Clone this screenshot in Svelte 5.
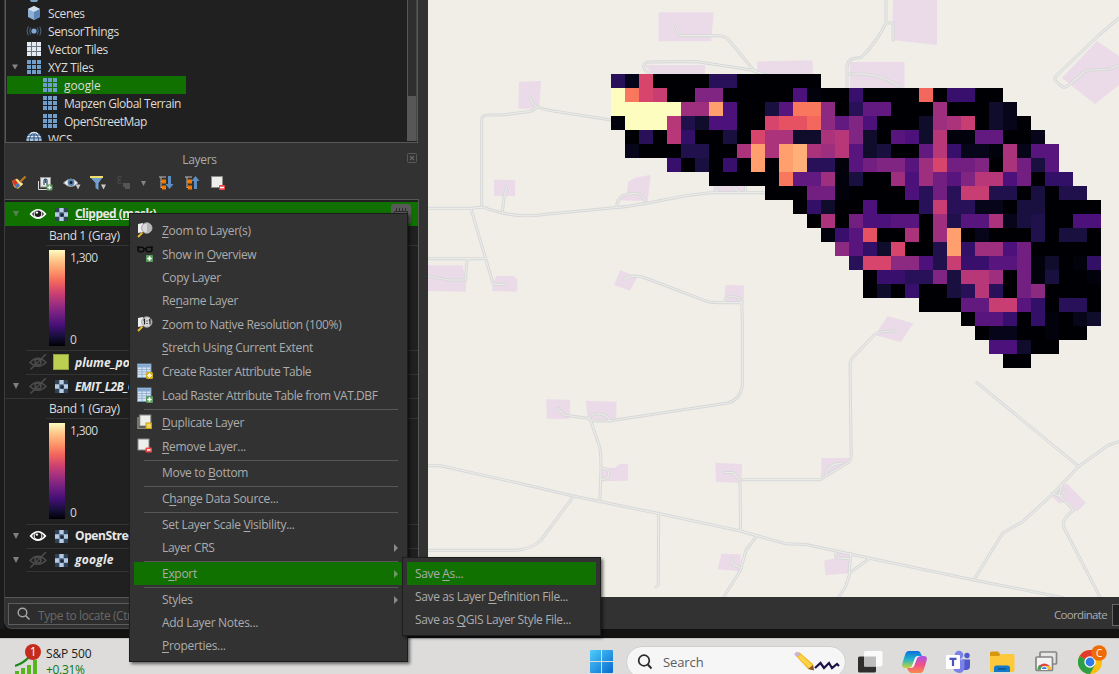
<script>
  const palette = {
    '0': '#000004', '1': '#02020d', a: '#06051a', b: '#0f0c2c', c: '#1a1040', d: '#20114d',
    e: '#29115a', f: '#331067', g: '#390f6e', h: '#4c117a', i: '#59157e', j: '#621980',
    k: '#721f81', l: '#802582', m: '#8c2981', n: '#9e2f7f', o: '#ab337c', p: '#b73779',
    q: '#c83e73', r: '#d8456c', s: '#e75263', t: '#f4675c', u: '#f9785d', v: '#fe9f6d',
    w: '#feb078', y: '#fcfdbf'
  };
  const dots = (n) => '.'.repeat(n);
  const grid = [
    'ear0000ee000000',
    'yurq00ll00000h100g0000t0gg00',
    'yyyyynnvh00ciuum0ejj000n000ba',
    '1yyypdbhh00rsstmjlh000bnoq0ba0',
    '.0e0pf00c0roobboplb0ihbp11jj00a',
    '.a000dd00ovovwonpibc00jpgaa1oaii',
    '....g0c0g0v0vwee1ikllinrkkl0okci',
    dots(7) + '00000ujjn1c00nhnkilpphk0ff',
    dots(11) + '000kk10000hekeqqdd0c0dd',
    dots(13) + '0fb00h000eqeeaa0cc0000',
    dots(14) + '0o0khhii0ndiioacd00hh',
    dots(15) + '1gis00o0nv0a000d0cc0',
    dots(16) + 'mifbr00dvfnnhk00000',
    dots(17) + 'errmmhdqggiik1b01f',
    dots(18) + '0ggeelcppn0k1c001',
    dots(18) + '0b0g00cepe0km0000',
    dots(22) + '000jjqqif0ee0',
    dots(25) + '0iig0f10ab',
    dots(26) + '0aa00100',
    dots(27) + 'hhb00',
    dots(28) + '00'
  ];
  const cells = grid.flatMap((row, r) =>
    [...row].map((k, c) => ({ k, x: 611 + c * 14, y: 74 + r * 14 })).filter((d) => d.k !== '.')
  );

  const pads = [
    '658.5,12.3 713.6,12.3 711.3,41.3 658.5,41.3',
    '645.5,65 705,65 705,74 651,74',
    '757,61.3 812.6,60.3 812.6,75 757,75',
    '519,81.7 541,81 539,108.7 518.3,108.7',
    '494,179.5 515.3,180.3 515,196.3 494,195.7',
    '628.3,181.7 635,177.7 650.7,174.7 647.7,201 617.7,200.3 626.7,193.3',
    '713.3,185 745,185 745,192.3 713.3,192.3',
    '428,265.3 462.3,265.3 466.3,280 465.7,291.7 428,291',
    '496.7,276 513.3,276 517.3,279.3 517.3,291.7 492.3,291 492.7,283',
    '620,270 637.3,277.3 630,290.7 614,285',
    '725.7,285 744,285.3 743.7,303.3 724,302',
    '893,0 937,0 937,45 892,40',
    '850,62 904.5,62 904.5,88 850,88',
    '1062,78 1097,41 1119,56 1119,85 1095,104',
    '546.3,399.3 570.2,399.7 569.3,419 546.7,418.7',
    '585.7,400.7 616.6,401.7 616.2,420.3 588,419.3',
    '602,467.7 615.3,467.7 619.7,464 628.1,463.7 628.1,480.7 602,481.3',
    '715.3,462.7 742.3,464 741,483 715.8,482',
    '821.5,458 850,458 849,463 821,479.5',
    '721.5,553.7 740.6,554.3 740.6,571.3 717.5,569.3',
    '834.4,551.7 850.8,555 848.5,573.3 825.5,575.3 824.2,560.7 834.4,558.3',
    '1066.7,483.3 1085.8,502.7 1077,511.7 1068,501.7 1058.8,503.3 1050.4,494.3',
    '887.7,316 913.3,323.3 900.7,342.3 875,335'
  ];

  const roads = [
    'M675.7 26.7Q677 34 682 35.7H720Q725 35.7 728 39L755 71.7',
    'M648.3 73Q643 70 644 65Q645 62 650 62L696 61.5L751.7 70L766 75',
    'M530 96.7Q530 102 536.7 106.7C545 110 552 111 558.3 111.7L611 120',
    'M536.7 106.7Q534 111 528.3 111.7L501.7 115H487Q481.7 115 481.7 120V206.7',
    'M428 208.3H471.7Q484 206 488 209L502.3 213Q525 218 548.3 214L616.7 207.5C650 205 680 194 713.3 192.7H765',
    'M506.7 186.7L504 198L502.3 212.7',
    'M616.7 206.7Q617 200 622 196Q641 189 645 201',
    'M716 192L719 187M733 186L739 192M745.5 185V192',
    'M471 209L493.3 284.3H506',
    'M428 258.7H485M470 258.7Q466.5 260 466.3 265L465.7 280H448L428 276',
    'M624 279.3Q634 273 648 279L701.7 299.3Q709 303 721.7 302.7H741.7L742.3 320V385Q741 399 728 403L608.7 421H592.3L587.9 418.3L563.5 415L557.8 408.3',
    'M724 302Q727 296 732 296Q741 297 742 304',
    'M588.8 419Q591 414 596 414Q607 413 610 421',
    'M591 421.7L599 445Q601 450 601 470L599.8 501.7',
    'M602 468.3Q609 468 608.7 474Q608 480 602 479.3',
    'M428 465.7H440.5L522.4 484L573.3 496L657.4 513.3L739.2 530.7L757 535.7L785.7 543.7L806 544.5L869.8 558.3L973.8 580L1062.3 597.5',
    'M573.3 496.7L541 540Q532 549 516 550.3H428',
    'M658.7 513.3L658.2 585L656 587',
    'M740.6 530.7L740 480L733 472.5H724.6',
    'M742.3 479.7H820.2L849 462Q851 460 851.2 456L850 365Q850 361 852.5 358L874 335Q878 331 895 331',
    'M825.5 475Q827.7 464 841 463.3',
    'M757 535.7L746 550L740.6 570L723.7 597',
    'M731.7 558.3Q731 566 740 567.3',
    'M869.8 558.3L850 572.7L845.5 586.7L838.8 597M850.8 553L849 573M835.7 552.3Q836 558 840 558.3H849',
    'M976.9 382.7L1079 466.7',
    'M1119 441.7L1108.8 445L1079 466L1053.5 493.3L1022.5 521.7L1002.6 533.3L973.8 580',
    'M1062.3 483.3L1059 495L1073.4 510Q1060 521 1064 528L1100 597M1053 493L1060 497L1065 490',
    'M847 88V68Q847 58 857 58L862 57Q878 40 886 23V0M847 74H853Q880 73 900 87M886 23H893V40',
    'M1119 18L1098 36L1056 76Q1053 80 1058 83L1063 87Q1066 88 1070 84L1083 73Q1086 70 1092 70L1110 69L1119 65'
  ];

  const browser = [
    { t: 'Scenes', icon: 'cube' },
    { t: 'SensorThings', icon: 'sensor' },
    { t: 'Vector Tiles', icon: 'vgrid' },
    { t: 'XYZ Tiles', icon: 'grid', open: true },
    { t: 'google', icon: 'grid', child: true, sel: true },
    { t: 'Mapzen Global Terrain', icon: 'grid', child: true },
    { t: 'OpenStreetMap', icon: 'grid', child: true },
    { t: 'WCS', icon: 'globe' }
  ];

  const menu = [
    { p: ['', 'Z', 'oom to Layer(s)'], icon: 'zoom' },
    { p: ['Show in ', 'O', 'verview'], icon: 'overview' },
    { p: ['Copy Layer', '', ''] },
    { p: ['Re', 'n', 'ame Layer'] },
    { p: ['Zoom to Nat', 'i', 've Resolution (100%)'], icon: 'native' },
    { p: ['', 'S', 'tretch Using Current Extent'] },
    { p: ['Create Raster Attribute Table', '', ''], icon: 'tablenew', tight: true },
    { p: ['Load Raster Attribute Table from VAT.DBF', '', ''], icon: 'tableadd', tight: true },
    null,
    { p: ['', 'D', 'uplicate Layer'], icon: 'dup' },
    { p: ['', 'R', 'emove Layer...'], icon: 'remove' },
    null,
    { p: ['Move to ', 'B', 'ottom'] },
    null,
    { p: ['C', 'h', 'ange Data Source...'] },
    null,
    { p: ['Set Layer Scale ', 'V', 'isibility...'] },
    { p: ['Layer CRS', '', ''], sub: true },
    null,
    { p: ['E', 'x', 'port'], sub: true, sel: true },
    null,
    { p: ['Styles', '', ''], sub: true },
    { p: ['Add Layer Notes...', '', ''] },
    { p: ['', 'P', 'roperties...'] }
  ];
  const submenu = [
    { p: ['Save ', 'A', 's...'], sel: true },
    { p: ['Save as Layer ', 'D', 'efinition File...'] },
    { p: ['Save as ', 'Q', 'GIS Layer Style File...'] }
  ];
  const nine = [0, 1, 2, 3, 4, 5, 6, 7, 8];
</script>

{#snippet treeIcon(kind)}
  <svg class="i16" viewBox="0 0 16 16">
    {#if kind === 'cube'}
      <path d="M2 4L8 1L14 4V12L8 15L2 12Z" fill="#8fb0d3" />
      <path d="M2 4L8 1L14 4L8 7Z" fill="#d3e1ef" />
      <path d="M8 7L14 4V12L8 15Z" fill="#5c87b6" />
    {:else if kind === 'sensor'}
      <circle cx="8" cy="8" r="2.6" fill="#7ea9d6" />
      <path d="M4.6 4.5Q2.8 8 4.6 11.5M11.4 4.5Q13.2 8 11.4 11.5M2.2 3.5Q-.2 8 2.2 12.5M13.8 3.5Q16.2 8 13.8 12.5" fill="none" stroke="#4c6784" />
    {:else if kind === 'globe'}
      <circle cx="8" cy="8.500" r="7.500" fill="#6e94bd" />
      <path d="M1.500 5.500H14.500M.5 9H15.500" stroke="#e2ecf5" stroke-width="1.200" fill="none" />
      <path d="M8 1Q2.500 5 3.500 12M8 1Q13.500 5 12.500 12M8 1V12" stroke="#32506f" stroke-width="1" fill="none" />
      <path d="M4 3Q8 0 12 3" stroke="#e2ecf5" stroke-width="1.300" fill="none" />
    {:else}
      {#if kind === 'vgrid'}<rect x="1" y="1" width="14" height="14" fill="#6b7785" />{/if}
      {#each nine as n}
        <rect x={1 + (n % 3) * 5} y={1 + Math.floor(n / 3) * 5} width="4" height="4"
          fill={kind === 'vgrid' ? '#e6ebf2' : '#6f9dcc'} />
      {/each}
    {/if}
  </svg>
{/snippet}

{#snippet eye()}
  <svg class="eye" viewBox="0 0 18 14">
    <path d="M.5 7Q9-3 17.500 7Q9 17 .5 7Z" fill="#fff" />
    <path d="M2.800 7Q4 5.200 5.600 4.300Q4.200 7 5.600 9.700Q4 8.800 2.800 7ZM15.200 7Q14 5.200 12.400 4.300Q13.800 7 12.400 9.700Q14 8.800 15.200 7Z" fill="#5a5a5a" />
    <circle cx="9" cy="6.800" r="3.300" fill="#1c1c1c" />
    <circle cx="7.900" cy="5.600" r="1.200" fill="#fff" />
  </svg>
{/snippet}
{#snippet eyeOff()}
  <svg class="eye off" viewBox="0 0 18 16">
    <path d="M1 8.500Q9 0 17 8.500Q9 16 1 8.500Z M17 0L1.500 15.500" fill="none" stroke="#4c4c4c" stroke-width="1.500" />
    <circle cx="9" cy="8" r="3" fill="none" stroke="#4c4c4c" stroke-width="1.500" />
  </svg>
{/snippet}
{#snippet raster()}
  <svg class="ras" viewBox="0 0 13 13">
    <path d="M0 0H13V13H0Z" fill="#2f4258" />
    <path d="M4.300 0H8.700V4.300H13V8.700H8.700V13H4.300V8.700H0V4.300H4.300Z" fill="#b5cbe3" />
    <path d="M4.300 4.300H8.700V8.700H4.300Z" fill="#49617c" />
    <path d="M5.500 5.500H8.700V8.700H5.500Z" fill="#1c2733" />
  </svg>
{/snippet}

{#snippet menuIcon(kind)}
  <svg class="mi" viewBox="0 0 16 16">
    {#if kind === 'zoom' || kind === 'native'}
      <path d="M1 2L6 1V10L1 11Z" fill="#eee" />
      <path d="M1 15L5.500 10.500" stroke="#e3b83b" stroke-width="2" />
      <circle cx="9.800" cy="6" r="5.200" fill="#d9d9d9" stroke="#a5a5a5" />
      {#if kind === 'zoom'}
        <path d="M10 1.500A4.500 4.500 0 0 1 10 10.500Z" fill="#b5b5b5" />
      {:else}
        <path d="M6.500 4.500L7.500 3.500V8.500M12 4.500L13 3.500V8.500M10 4.500V5.500M10 7V8" stroke="#222" stroke-width="1.200" fill="none" />
      {/if}
    {:else if kind === 'overview'}
      <path d="M0 1H2M14 1H16" stroke="#0b0b0b" stroke-width="1.500" />
      <rect x="1" y="1.300" width="6" height="4.500" rx="2.200" fill="none" stroke="#0b0b0b" stroke-width="1.500" />
      <rect x="9" y="1.300" width="6" height="4.500" rx="2.200" fill="none" stroke="#0b0b0b" stroke-width="1.500" />
      <path d="M7 2.500H9" stroke="#0b0b0b" />
      <rect x="9" y="9" width="7" height="7" rx="1" fill="#5a9a5f" />
      <path d="M12.500 10.300V14.700M10.300 12.500H14.700" stroke="#fff" stroke-width="1.600" />
    {:else if kind === 'tablenew' || kind === 'tableadd'}
      <rect x=".5" y="1" width="13.500" height="13.500" fill="#d8e4f1" stroke="#7296bd" />
      <rect x="1" y="1.500" width="12.500" height="3" fill="#85aad2" />
      <path d="M1 6.500H14M1 8.800H14M1 11.200H14M5 4V14M9.500 4V14" stroke="#8aa9ca" stroke-width=".8" />
      {#if kind === 'tablenew'}
        <rect x="9" y="9" width="7" height="7" rx="1.500" fill="#d3ad1d" />
        <path d="M12.500 10V15M10 12.500H15M10.800 10.800L14.200 14.200M14.200 10.800L10.800 14.200" stroke="#fff6c8" />
      {:else}
        <rect x="9" y="9" width="7" height="7" rx="1" fill="#5a9a5f" />
        <path d="M12.500 10.300V14.700M10.300 12.500H14.700" stroke="#fff" stroke-width="1.600" />
      {/if}
    {:else if kind === 'dup'}
      <path d="M1 3V14.300H11" fill="none" stroke="#8b8b86" stroke-width="1.500" />
      <rect x="2.800" y="1" width="11" height="11" fill="#eeeeec" stroke="#888a85" />
      <rect x="9" y="9" width="5.500" height="5.500" fill="#f2d45c" stroke="#c4a000" />
    {:else}
      <rect x="1" y="1" width="11" height="11" fill="#eeeeec" stroke="#888a85" />
      <rect x="8.500" y="9.500" width="6.500" height="5" rx="1" fill="#ef4444" />
      <path d="M10 12H13.500" stroke="#fff" stroke-width="1.500" />
    {/if}
  </svg>
{/snippet}

{#snippet menuItem(it)}
  <div class="item" class:tall={it.icon} class:sel={it.sel} class:tight={it.tight}>
    <span class="ico">{#if it.icon}{@render menuIcon(it.icon)}{/if}</span>
    <span class="label">{it.p[0]}<u>{it.p[1]}</u>{it.p[2]}</span>
    {#if it.sub}<svg class="arr" viewBox="0 0 4 8"><path d="M0 0L4 4L0 8Z" fill={it.sel ? '#6f9a68' : '#8a8a8a'} /></svg>{/if}
  </div>
{/snippet}

{#snippet legend()}
  <div class="row band"><span>Band 1 (Gray)</span></div>
  <div class="ramp">
    <div class="bar"></div>
    <div class="vals"><span>1,300</span><span>0</span></div>
  </div>
{/snippet}

<div class="app">
  <div class="work">
    <div class="edge"></div>
    <aside>
      <div class="browser">
        <div class="tree">
          <div class="prev"></div>
          {#each browser as b}
            <div class="brow" class:child={b.child} class:sel={b.sel}>
              <span class="tw">{#if b.open}<svg viewBox="0 0 6 6"><path d="M0 .5H6L3 5.500Z" fill="#858585" /></svg>{/if}</span>
              {@render treeIcon(b.icon)}
              <span class="bt">{b.t}</span>
            </div>
          {/each}
        </div>
        <div class="scroll"><div class="thumb"></div></div>
      </div>

      <header>
        <span>Layers</span>
        <svg class="close" viewBox="0 0 10 10"><rect x=".5" y=".5" width="9" height="9" rx="1" fill="none" stroke="#5a5a5a" /><path d="M3 3L7 7M7 3L3 7" stroke="#666" stroke-width="1.200" /></svg>
      </header>

      <div class="tools">
        <svg width="16" height="16" viewBox="0 0 16 16">
          <path d="M1 6L6 3.500L12 9L7 14L3 12Z" fill="#e9b93b" /><path d="M1 6L4 4.500L7 8L3.500 11Z" fill="#d9362b" /><path d="M3.500 11L7 8L9 10L6.500 13.500Z" fill="#3e78bd" /><path d="M6 4L12 9L10 11L5 5Z" fill="#f6e6a0" /><path d="M9 7L14.500 1.500" stroke="#b9791f" stroke-width="2.200" />
        </svg>
        <svg width="16" height="16" viewBox="0 0 16 16">
          <path d="M1.500 6V14.500H10" fill="none" stroke="#ddd" /><rect x="3.500" y="2.500" width="10" height="9.500" fill="#e8e8e8" stroke="#999" /><path d="M7 10V5Q8.500 3 10 5V10M8.500 4V8" fill="none" stroke="#35526f" stroke-width="1.200" /><rect x="9.500" y="9.500" width="6" height="6" rx="1" fill="#5a9a5f" /><path d="M12.500 10.500V14.500M10.500 12.500H14.500" stroke="#fff" stroke-width="1.300" />
        </svg>
        <svg width="18" height="16" viewBox="0 0 18 16">
          <path d="M.5 8Q8 0 15 8Q8 15 .5 8Z" fill="#f2f2f2" stroke="#9a9a9a" /><circle cx="8" cy="7.500" r="3.400" fill="#5682b0" /><circle cx="8" cy="7.500" r="1.500" fill="#16202b" /><path d="M12.500 9.500H17.500L15 14.500Z" fill="#c9c9c9" />
        </svg>
        <svg width="18" height="16" viewBox="0 0 18 16">
          <path d="M1 2H14L9.500 8V15L6.500 13V8Z" fill="#729fcf" /><path d="M1 1H14V3H1Z" fill="#f3e06c" /><path d="M12 9.500H17L14.500 14.500Z" fill="#c9c9c9" />
        </svg>
        <svg width="16" height="16" viewBox="0 0 16 16">
          <path d="M6 2Q1 1 2 4Q3 5 5 5Q1 5 2 8Q3 9 6 8" fill="none" stroke="#454545" stroke-width="1.300" /><path d="M7 8H14V14H9V12H7Z" fill="#555" />
        </svg>
        <svg class="dd" width="5" height="5" viewBox="0 0 6 6"><path d="M0 0H6L3 6Z" fill="#858585" /></svg>
        <svg width="16" height="16" viewBox="0 0 16 16">
          <path d="M1 2H8M3 2V13M3 6.500H6M3 12.500H6" stroke="#bbb" fill="none" /><rect x="4" y="4.500" width="4" height="4" fill="#f57900" /><rect x="4" y="10.500" width="4" height="4" fill="#f57900" /><path d="M10 1H13V9H15.500L11.500 14L7.500 9H10Z" fill="#5e8fc4" />
        </svg>
        <svg width="16" height="16" viewBox="0 0 16 16">
          <path d="M1 2H8M3 2V13M3 6.500H6M3 12.500H6" stroke="#bbb" fill="none" /><rect x="4" y="4.500" width="4" height="4" fill="#f57900" /><rect x="4" y="10.500" width="4" height="4" fill="#f57900" /><path d="M10 14H13V6H15.500L11.500 1L7.500 6H10Z" fill="#5e8fc4" />
        </svg>
        <svg width="16" height="16" viewBox="0 0 16 16">
          <rect x="1.500" y="1.500" width="11" height="11" fill="#eeeeec" stroke="#888a85" /><rect x="9" y="10" width="6" height="5" rx="1" fill="#ef4444" /><path d="M10 12.500H14" stroke="#fff" stroke-width="1.500" />
        </svg>
      </div>

      <div class="layers">
        <div class="row lay selrow">
          <i class="tri"></i>{@render eye()}{@render raster()}<b class="und">Clipped (mask)</b>
          <span class="chip"><svg width="14" height="10" viewBox="0 0 14 10"><path d="M2.500 0V3M5.500 0V3M8.500 0V3M11.500 0V3M.5 10V3.500H13.500V10" stroke="#2d2d2d" fill="none" /></svg></span>
        </div>
        {@render legend()}
        <div class="row lay top"><i></i>{@render eyeOff()}<span class="swatch"></span><b class="it">plume_polygons</b></div>
        <div class="row lay top"><i class="tri"></i>{@render eyeOff()}{@render raster()}<b class="it emit">EMIT_L2B_CH4</b></div>
        <div class="lg2">{@render legend()}</div>
        <div class="row lay top"><i class="tri"></i>{@render eye()}{@render raster()}<b>OpenStreetMap</b></div>
        <div class="row lay top last"><i class="tri"></i>{@render eyeOff()}{@render raster()}<b class="it goog">google</b></div>
      </div>

      <div class="locate">
        <svg width="14" height="14" viewBox="0 0 14 14"><circle cx="5.500" cy="5.500" r="4.300" fill="none" stroke="#a8a8a8" stroke-width="1.400" /><path d="M8.700 8.700L12.500 12.500" stroke="#a8a8a8" stroke-width="1.600" /></svg>
        <span>Type to locate (Ctrl+K)</span>
      </div>
    </aside>

    <main>
      <svg class="map" width="691" height="597" viewBox="428 0 691 597">
        {#each pads as p}<polygon points={p} fill="#ebdbe8" />{/each}
        <g fill="none" stroke-linejoin="round" stroke-linecap="round">
          {#each roads as d}<path {d} stroke="#d6d8d8" stroke-width="3" />{/each}
          {#each roads as d}<path {d} stroke="#ebebe8" stroke-width="1.200" />{/each}
        </g>
        <g shape-rendering="crispEdges">
          {#each cells as c}<rect x={c.x} y={c.y} width="14" height="14" fill={palette[c.k]} />{/each}
        </g>
      </svg>
      <div class="status"><span>Coordinate</span><div class="coord"></div></div>
    </main>
  </div>
  <div class="gap"></div>

  <footer>
    <div class="stock">
      <svg width="26" height="30" viewBox="0 0 26 30">
        <path d="M0 27H4V30H0ZM6 24H10V30H6ZM12 21H16V30H12ZM18 16H22V30H18Z" fill="#58b520" />
        <path d="M0 22Q9 19 15 12" fill="none" stroke="#1c8a1c" stroke-width="2.200" />
        <circle cx="18" cy="8" r="8" fill="#c42b1c" />
        <text x="18" y="12.200" text-anchor="middle" font-size="12" fill="#fff" font-family="Open Sans, sans-serif">1</text>
      </svg>
      <div class="quote"><span class="sp">S&amp;P 500</span><span class="up">+0.31%</span></div>
    </div>
    <div class="dock">
      <svg width="24" height="24" viewBox="0 0 24 24" class="win">
        <defs><linearGradient id="wg" x1="0" y1="0" x2="1" y2="1"><stop offset="0" stop-color="#4fcdfb" /><stop offset="1" stop-color="#0669cf" /></linearGradient></defs>
        <path d="M0 1Q0 0 1 0H11V11H0ZM12 0H22Q23 0 23 1V11H12ZM0 12H11V23H1Q0 23 0 22ZM12 12H23V22Q23 23 22 23H12Z" fill="url(#wg)" />
      </svg>
      <div class="search">
        <svg width="16" height="16" viewBox="0 0 16 16"><circle cx="7" cy="6.500" r="5.300" fill="none" stroke="#2b2b2b" stroke-width="1.700" /><path d="M10.800 10.500L14.500 14.500" stroke="#2b2b2b" stroke-width="2" /></svg>
        <span>Search</span>
        <svg width="48" height="22" viewBox="0 0 48 22">
          <path d="M2 4L6 1L20 13L21 19L15 18Z" fill="#f5b91d" /><path d="M5 6L17 18L20 15L8 4Z" fill="#fbd34c" /><path d="M1 3L4 .5L7 3.500L4 6Z" fill="#c9b3e0" /><path d="M15 18L21 19.500L20 14Z" fill="#8b5a24" />
          <path d="M22 17L27.500 12L31 17L36 12L39 17L44 13L46 15" fill="none" stroke="#1a1446" stroke-width="2.200" />
        </svg>
      </div>
      <svg class="tv" width="26" height="24" viewBox="0 0 26 24"><rect x="0" y="6.500" width="18" height="16" rx="1.500" fill="#2e2e2e" /><rect x="6" y="1" width="18.500" height="15.500" rx="1.500" fill="#fafafa" /><rect x="6" y="6.500" width="12" height="10" fill="#bdbdbd" /></svg>
      <svg class="cp" width="25" height="24" viewBox="0 0 25 24">
        <defs>
          <linearGradient id="c1" x1="0" y1="0" x2="0" y2="1"><stop offset="0" stop-color="#0a6fe0" /><stop offset=".5" stop-color="#24b3c9" /><stop offset="1" stop-color="#c8d53a" /></linearGradient>
          <linearGradient id="c2" x1="0" y1="0" x2="0" y2="1"><stop offset="0" stop-color="#a855e8" /><stop offset=".5" stop-color="#ee4f8c" /><stop offset="1" stop-color="#fb8a4a" /></linearGradient>
        </defs>
        <path d="M7 1H16Q18 1 19 4L20 6H16Q14 6 13 8L10 16Q9 18 6 18H3Q-1 18 .5 13L3 5Q4 1 7 1Z" fill="url(#c1)" />
        <path d="M18 23H9Q7 23 6 20L5 18H9Q11 18 12 16L15 8Q16 6 19 6H22Q26 6 24.500 11L22 19Q21 23 18 23Z" fill="url(#c2)" />
        <path d="M13 8Q14 6 16 6H19Q16 6 15 8L12 16Q11 18 8 18Q9.500 17.500 10 16Z" fill="#fff" opacity=".7" />
      </svg>
      <svg class="tm" width="25" height="24" viewBox="0 0 25 24"><circle cx="13" cy="5" r="4.300" fill="#7b83eb" /><circle cx="21" cy="5.500" r="2.700" fill="#5059c9" /><path d="M16 9.500H24V16Q24 20 20 20H16Z" fill="#5059c9" /><path d="M7 9.500H18.500V17Q18 23 13 23Q7 22 7 17Z" fill="#7b83eb" /><rect x="0" y="5" width="14" height="14" rx="1" fill="#fff" /><path d="M3.500 8.800H10.500M7 8.800V16" stroke="#4b53bc" stroke-width="2.200" /></svg>
      <svg class="fd" width="25" height="24" viewBox="0 0 25 24"><path d="M0 3Q0 1.500 1.500 1.500H8L10 4V8H0Z" fill="#d9980b" /><path d="M0 6H9L11 4H23Q24.500 4 24.500 5.500V20Q24.500 22 23 22H1.500Q0 22 0 20Z" fill="#fdc83a" /><path d="M4 22V18Q4 15.500 6.500 15.500H17.500Q20 15.500 20 18V22Z" fill="#1479c9" /><path d="M8 19H16" stroke="#0c528f" stroke-width="1.500" /></svg>
      <svg class="cr" width="23" height="24" viewBox="0 0 23 24"><rect x="5" y="2" width="16.500" height="12" rx="1" fill="#e6e6e6" stroke="#858585" stroke-width="1.700" /><rect x="1" y="7" width="16.500" height="13.500" rx="1" fill="#f3f3f3" stroke="#858585" stroke-width="1.700" /><path d="M2.500 19.500A6.800 6.800 0 0 1 16 19.500Z" fill="#e0453a" /><path d="M2.500 19.500A6.800 6.800 0 0 1 4.500 14.800L8 19.500Z" fill="#38a852" /><path d="M16 19.500A6.500 6.500 0 0 0 15 16H10V19.500Z" fill="#f7bf28" /><path d="M6.200 19.500A3.100 3.100 0 0 1 12.400 19.500Z" fill="#3f7fe8" stroke="#fff" /></svg>
      <svg class="ch" width="30" height="32" viewBox="0 0 30 32">
        <circle cx="12" cy="18" r="12" fill="#fbbf12" /><path d="M12 18L1.600 12A12 12 0 0 1 22.400 12Z" fill="#e33b2e" /><path d="M12 6A12 12 0 0 1 22.400 12H12Z" fill="#e33b2e" /><path d="M12 18L1.600 12A12 12 0 0 0 12 30L17 21Z" fill="#2c9f47" /><circle cx="12" cy="18" r="5.700" fill="#fff" /><circle cx="12" cy="18" r="4.400" fill="#2f7bea" />
        <circle cx="21" cy="9" r="7.800" fill="#ee6c05" /><text x="21" y="12.800" text-anchor="middle" font-size="10" fill="#fff" font-family="Open Sans, sans-serif">C</text>
      </svg>
    </div>
  </footer>

  <div class="menu main">
    {#each menu as it}
      {#if it}{@render menuItem(it)}{:else}<div class="sep"></div>{/if}
    {/each}
  </div>
  <div class="menu sub">
    {#each submenu as it}{@render menuItem(it)}{/each}
  </div>
</div>

<style>
  :global(body) { background: #323232; overflow: hidden; }
  .app { position: relative; width: 1119px; height: 674px; overflow: hidden; display: flex; flex-direction: column; font: 12px/18px "Open Sans", "Noto Sans", sans-serif; letter-spacing: -0.3px; color: #dcdcdc; background: #121212; white-space: nowrap; }
  svg { display: block; flex: none; }
  .work { display: flex; height: 629px; }
  .edge { width: 4px; background: #1a1b1d; }
  aside { width: 424px; box-sizing: border-box; background: #323232; display: flex; flex-direction: column; border-left: 1px solid #3c3c3c; border-bottom: 1px solid #484848; border-bottom-left-radius: 8px; }
  .browser { width: 413px; height: 143px; box-sizing: border-box; border: 1px solid #575757; border-top: 0; background: #202020; display: flex; padding-bottom: 1px; }
  .tree { flex: 1; overflow: hidden; padding-left: 1px; }
  .prev { height: 4px; }
  .prev::after { content: ""; display: block; width: 8px; height: 2px; margin-left: 23px; border-radius: 0 0 5px 5px; background: #7da0c5; }
  .brow { display: flex; align-items: center; height: 18px; }
  .brow.child { padding-left: 16px; width: 163px; }
  .brow.sel { background: #107000; }
  .tw { width: 19px; }
  .tw svg { width: 6px; height: 6px; margin-left: 5px; }
  .i16 { width: 16px; height: 16px; }
  .bt { margin-left: 6px; padding-top: 2px; letter-spacing: -0.36px; }
  .child .bt { letter-spacing: -0.480px; }
  .child.sel .bt { letter-spacing: -0.100px; }
  .scroll { width: 10px; border-left: 1px solid #575757; border-right: 1px solid #484848; background: #2f2f2f; display: flex; align-items: flex-end; box-sizing: border-box; }
  .thumb { width: 10px; height: 45px; background: #575757; }
  header { height: 32px; padding-top: 1px; display: flex; align-items: center; color: #ababab; position: relative; box-sizing: border-box; }
  header span { width: 389px; text-align: center; padding-top: 1px; }
  .close { width: 10px; height: 10px; position: absolute; left: 402px; top: 10px; }
  .tools { height: 24px; display: flex; padding-left: 6px; align-items: flex-start; }
  .tools svg { margin-right: 10px; }
  .tools svg:nth-child(3) { margin-right: 8px; }
  .tools svg:nth-child(4) { margin-right: 9px; }
  .tools svg.dd { margin: 6px 12px 0 -1px; }
  .layers { width: 414px; height: 399px; box-sizing: border-box; border: 1px solid #575757; border-left: 0; background: #202020; padding-top: 2px; overflow: hidden; }
  .row { display: flex; align-items: center; height: 23px; box-sizing: border-box; }
  .lay { height: 24px; position: relative; }
  .top::before { content: ""; position: absolute; left: 21px; right: 0; top: 0; height: 1px; background: #343434; }
  .last::after { content: ""; position: absolute; left: 21px; right: 0; bottom: 0; height: 1px; background: #343434; }
  .selrow { background: #107000; }
  .lay i { width: 20px; }
  .tri::before { content: ""; display: block; margin-left: 8px; width: 0; border: 3.500px solid transparent; border-top: 6px solid #808080; border-bottom: 0; }
  .selrow .tri::before { border-top-color: #5b7e56; }
  .eye { width: 18px; height: 14px; margin: 0 8px 0 4px; }
  .off { height: 16px; }
  .ras { width: 13px; height: 13px; margin-right: 7px; }
  .swatch { width: 14px; height: 14px; border: 1px solid #93a03d; background: #bccf50; margin: 0 6px 0 -2px; }
  .lay b { font-weight: 700; letter-spacing: -0.400px; color: #e8e8e8; }
  .lay b.it { font-style: italic; letter-spacing: 0.050px; padding-top: 2px; }
  .lay b.emit { letter-spacing: -0.480px; }
  .lay b.goog { padding-top: 0; letter-spacing: 0.250px; }
  .lay b.und { text-decoration: underline; letter-spacing: -0.540px; }
  .chip { position: absolute; left: 386px; top: 2px; width: 20px; height: 20px; border-radius: 3px; background: #595959; padding: 4px 3px; box-sizing: border-box; }
  .band { height: 20px; margin-left: 41px; border-bottom: 1px solid #343434; padding-left: 3px; letter-spacing: -0.380px; }
  .ramp { height: 104px; display: flex; padding: 4px 0 0 44px; box-sizing: border-box; }
  .bar { width: 16px; height: 96px; background: linear-gradient(#fcfdbf, #fec488 11%, #fd9266 23%, #f3655c 33%, #cd4071 45%, #9e2f7f 56%, #721f81 67%, #440f76 79%, #180f3d 90%, #000004); }
  .vals { height: 100px; margin-left: 5px; display: flex; flex-direction: column; justify-content: space-between; margin-top: -1px; color: #d6d6d6; letter-spacing: -0.600px; }
  .lg2 { border-top: 1px solid #343434; }
  .lg2 .ramp { height: 105px; }
  .locate { margin: 5px 0 0 3px; width: 410px; height: 22px; box-sizing: border-box; border: 1px solid #5c5c5c; background: #2d2d2d; display: flex; align-items: center; padding-left: 8px; color: #696969; gap: 7px; letter-spacing: -0.420px; }
  .locate span { padding-top: 3px; }
  main { width: 691px; }
  .map { background: #f1eee8; }
  .status { height: 31px; padding-top: 1px; background: #323232; border-bottom: 1px solid #414141; display: flex; justify-content: flex-end; align-items: center; color: #ababab; gap: 5px; }
  .status span { font-size: 11.500px; letter-spacing: -0.660px; padding-top: 2px; }
  .coord { width: 7px; height: 22px; box-sizing: border-box; border: 1px solid #666; border-right: 0; background: #202020; margin-top: 2px; }
  .gap { height: 9px; background: #131211; }
  footer { flex: 1; background: #dddcdb; border-top: 1px solid #c2c2c2; color: #1c1c1c; display: flex; overflow: hidden; box-sizing: border-box; }
  .stock { display: flex; width: 589px; padding: 5px 0 0 15px; height: 40px; box-sizing: border-box; }
  .quote { display: flex; flex-direction: column; line-height: 16px; margin-left: 5px; margin-top: 2px; }
  .sp { letter-spacing: -0.100px; }
  .up { color: #117a11; }
  .dock { display: flex; height: 48px; padding-top: 8px; box-sizing: border-box; }
  .dock > svg { margin-top: 3px; }
  .win { margin-left: 1px; }
  .search { margin-left: 12px; margin-top: -1px; width: 220px; height: 32px; border-radius: 16px; background: #f6f6f6; box-sizing: border-box; border: 1px solid #cfcfcf; display: flex; align-items: center; padding: 0 4px 0 10px; color: #5c5c5c; font-size: 13px; letter-spacing: -0.1px; }
  .search span { margin-left: 10px; flex: 1; }
  .tv { margin-left: 12px; }
  .cp { margin-left: 18px; }
  .tm { margin-left: 19px; }
  .fd { margin-left: 19px; }
  .cr { margin-left: 20px; }
  .dock > .ch { margin-left: 20px; margin-top: -3px; }
  .menu { position: absolute; background: #323232; border: 1px solid #1d1d1d; box-sizing: border-box; padding: 4px; color: #acacac; box-shadow: 2px 2px 3px rgba(0, 0, 0, 0.55); }
  .main { left: 129px; top: 213px; width: 279px; height: 449px; }
  .sub { left: 402px; top: 557px; width: 199px; height: 79px; letter-spacing: -0.360px; }
  .item { height: 23px; display: flex; align-items: center; }
  .item.tall { height: 24px; }
  .item.sel { background: #107000; }
  .item.tight { letter-spacing: -0.450px; }
  .ico { width: 28px; }
  .mi { width: 16px; height: 16px; margin-left: 3px; }
  .label { flex: 1; padding-top: 1px; }
  .tall .label { padding-top: 2px; }
  .sub .ico { width: 8px; }
  .label u { text-decoration: underline; text-underline-offset: 2px; }
  .arr { width: 4px; height: 8px; margin-right: 5px; }
  .sep { height: 3px; margin: 0 5px 0 10px; border-bottom: 1px solid #575757; box-sizing: border-box; }
</style>
